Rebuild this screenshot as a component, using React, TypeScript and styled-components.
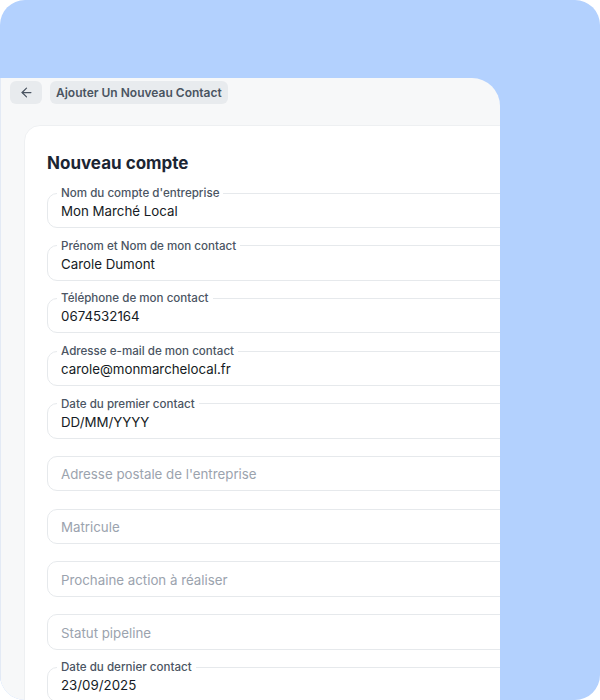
import React from "react";
import styled, { createGlobalStyle } from "styled-components";
import { ArrowLeft } from "lucide-react";

const Global = createGlobalStyle`
  html, body { margin: 0; padding: 0; background: #ffffff; }
  body { font-family: Inter, "Noto Sans", sans-serif; -webkit-font-smoothing: antialiased; }
  * { box-sizing: border-box; }
`;

const Frame = styled.div`
  width: 600px;
  height: 700px;
  background: #b3d1fe;
  border-radius: 25px;
  overflow: hidden;
  padding-top: 78px;
`;

const Screen = styled.div`
  width: 500px;
  height: 622px;
  background: #f7f8f9;
  border-top-right-radius: 28px;
  border-left: 1px solid #e3eaf5;
  overflow: hidden;
  display: flex;
  flex-direction: column;
`;

const TopBar = styled.div`
  display: flex;
  align-items: center;
  gap: 8px;
  padding: 3px 0 0 9px;
`;

const BackButton = styled.button`
  width: 32px;
  height: 23px;
  border: none;
  border-radius: 6px;
  background: #e8ebee;
  color: #4a5461;
  display: flex;
  align-items: center;
  justify-content: center;
  padding: 0;
`;

const Chip = styled.div`
  height: 23px;
  padding: 0 6px;
  border-radius: 6px;
  background: #e8ebee;
  color: #4a5461;
  font-size: 12px;
  font-weight: 600;
  display: flex;
  align-items: center;
`;

const Card = styled.div`
  margin: 21px 0 0 23px;
  width: 540px;
  flex: 1;
  background: #ffffff;
  border: 1px solid #eef0f2;
  border-radius: 16px 16px 0 0;
  padding: 27px 0 0 22px;
`;

const Title = styled.h1`
  margin: 0 0 12px;
  font-size: 17px;
  line-height: 21px;
  font-weight: 700;
  color: #1b2533;
`;

const Fields = styled.div`
  display: flex;
  flex-direction: column;
  gap: 10.7px;
`;

const Field = styled.fieldset`
  margin: 0;
  min-width: 0;
  border: 1px solid #e6e9ec;
  border-radius: 10px;
  padding: 0 13px 7px 9px;
`;

const Legend = styled.legend<{ $empty?: boolean }>`
  height: 14px;
  line-height: 14px;
  font-size: 11.6px;
  font-weight: 500;
  color: #4b5563;
  padding: ${(p) => (p.$empty ? "0" : "0 4px")};
  margin-left: 0;
`;

const Value = styled.div<{ $placeholder?: boolean }>`
  padding: 2px 0 0 4px;
  font-size: 13.3px;
  line-height: 18px;
  height: 20px;
  color: ${(p) => (p.$placeholder ? "#9ba3ae" : "#151b24")};
`;

type Item = { label?: string; value: string };

const items: Item[] = [
  { label: "Nom du compte d'entreprise", value: "Mon Marché Local" },
  { label: "Prénom et Nom de mon contact", value: "Carole Dumont" },
  { label: "Téléphone de mon contact", value: "0674532164" },
  { label: "Adresse e-mail de mon contact", value: "carole@monmarchelocal.fr" },
  { label: "Date du premier contact", value: "DD/MM/YYYY" },
  { value: "Adresse postale de l'entreprise" },
  { value: "Matricule" },
  { value: "Prochaine action à réaliser" },
  { value: "Statut pipeline" },
  { label: "Date du dernier contact", value: "23/09/2025" },
];

export default function App() {
  return (
    <>
      <Global />
      <Frame>
        <Screen>
          <TopBar>
            <BackButton aria-label="Retour">
              <ArrowLeft size={15} strokeWidth={2} />
            </BackButton>
            <Chip>Ajouter Un Nouveau Contact</Chip>
          </TopBar>
          <Card>
            <Title>Nouveau compte</Title>
            <Fields>
              {items.map((it, i) => (
                <Field key={i}>
                  <Legend $empty={!it.label}>{it.label ?? ""}</Legend>
                  <Value $placeholder={!it.label}>{it.value}</Value>
                </Field>
              ))}
            </Fields>
          </Card>
        </Screen>
      </Frame>
    </>
  );
}
